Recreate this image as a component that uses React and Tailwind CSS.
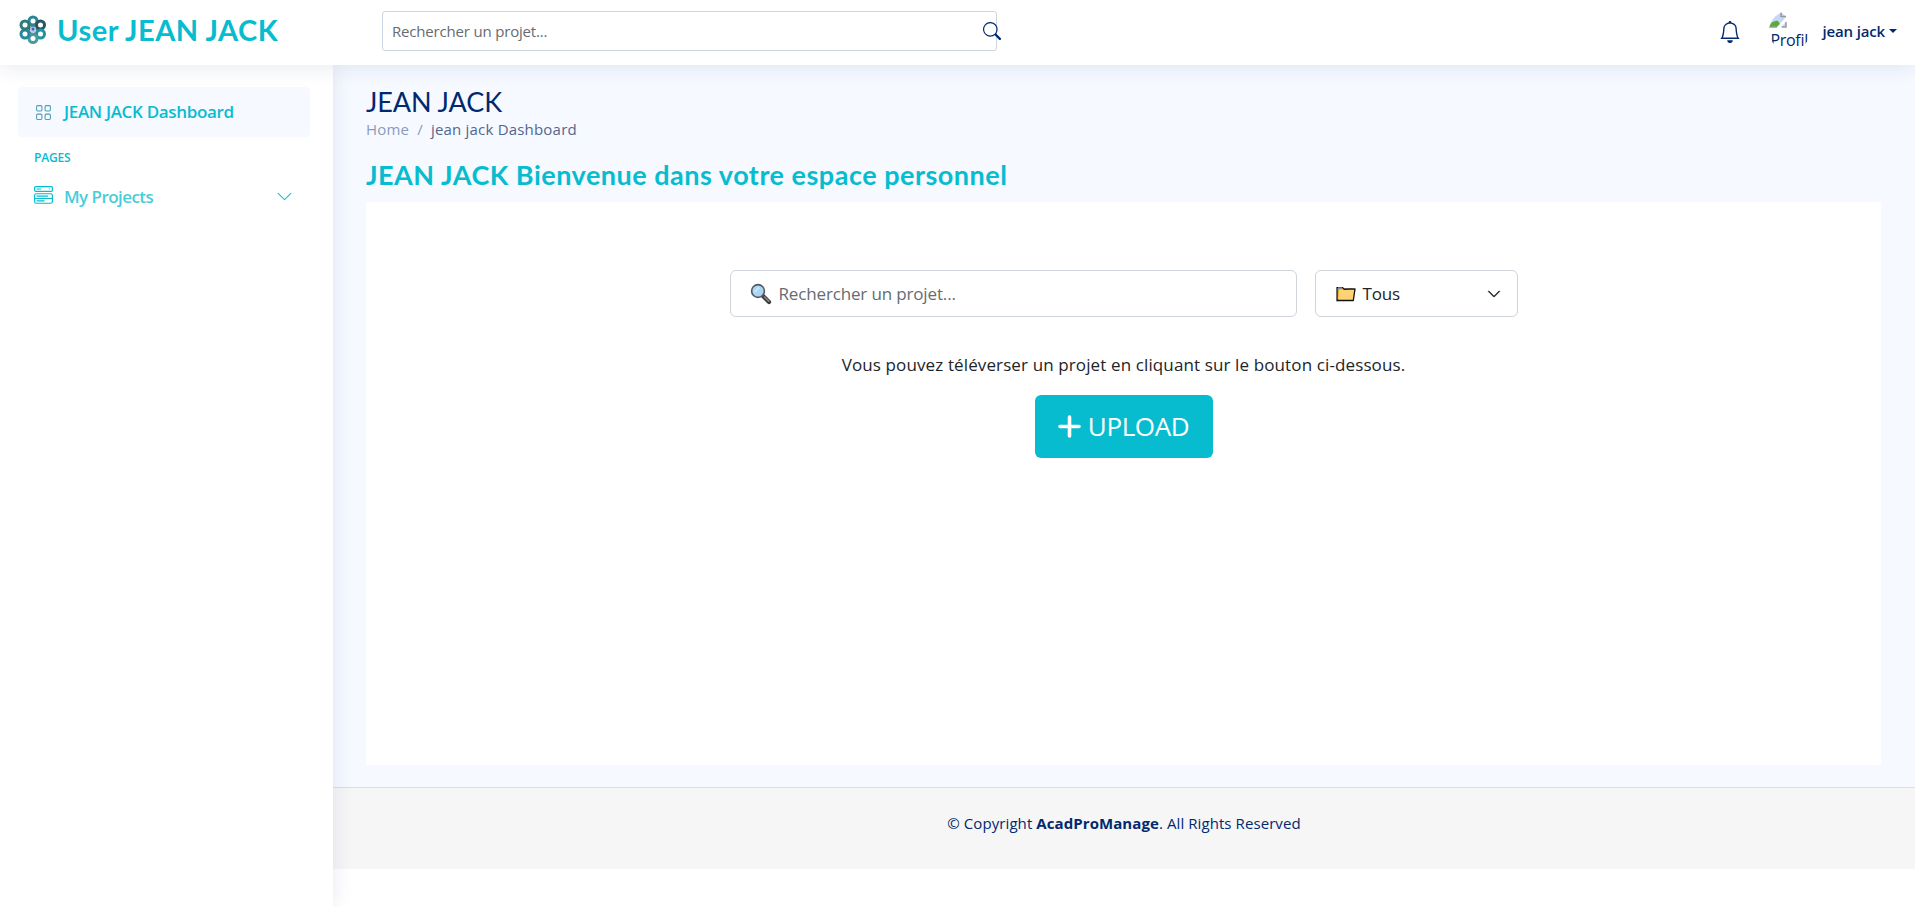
import { BsGrid, BsMenuButtonWide, BsChevronDown, BsSearch, BsBell } from "react-icons/bs";

const petals = [
  [14, 6, "#2b8795"], [21.5, 10, "#27565c"], [21.5, 19, "#1f93a3"],
  [14, 23.5, "#4a9a98"], [6, 19, "#2389a0"], [6, 10, "#2f7b78"],
];

function Logo() {
  return (
    <svg viewBox="0 0 28 30" className="h-[30px] w-7 shrink-0">
      <path d="M14 9v12M8.500 12l11 6M19.500 12l-11 6" stroke="#1b3d44" strokeWidth="3.5" />
      {petals.map(([x, y, c]) => (
        <circle key={x + "-" + y} cx={x} cy={y} r="4" fill="#fff" stroke={c} strokeWidth="3" />
      ))}
      <circle cx="14" cy="14.8" r="3.4" fill="#b9cbe0" />
      <circle cx="14" cy="14" r="1.5" fill="#3566b8" />
    </svg>
  );
}

function Glass() {
  return (
    <svg viewBox="0 0 22 22" className="h-[22px] w-[22px] shrink-0">
      <path d="M13 13 19 19" stroke="#3b3b3b" strokeWidth="4.2" strokeLinecap="round" />
      <path d="M14.5 14 18.8 18.2" stroke="#858585" strokeWidth="1.7" strokeLinecap="round" />
      <circle cx="8" cy="8" r="6.4" fill="#a9d5f5" stroke="#565a5f" strokeWidth="1.6" />
      <path d="M4.5 9 9 4.5" stroke="#c9e5f9" strokeWidth="2" />
    </svg>
  );
}

function Folder() {
  return (
    <svg viewBox="0 0 20 18" className="h-[18px] w-5 shrink-0">
      <path d="M1 15.500V2.500h5.500L8 4h8v5Z" fill="#e8a317" stroke="#111" strokeWidth="1.2" />
      <path d="M2 3h4" stroke="#3f8fe0" strokeWidth="1.500" />
      <path d="M2 15.500 3.200 4.600l15.800-.8-1.700 11.700Z" fill="#ffd273" />
      <path d="M7.500 4.300 19 3.800l-1.700 11.700H1" fill="none" stroke="#111" strokeWidth="1.300" strokeLinejoin="round" />
    </svg>
  );
}

function BrokenImage() {
  return (
    <svg viewBox="0 0 18 17" className="h-[17px] w-[18px]">
      <path d="M3 1h9l5 5v10H0V8Z" fill="#c5d8f6" />
      <path d="M0 16c2-5 6-7 9-6l4 6Z" fill="#58ad35" />
      <path d="M18 5 8 16h4l6-6Z" fill="#fff" />
      <path d="M12 1v4.500h5M17 11v5h-4M0 16h8" fill="none" stroke="#9a9a9a" strokeWidth="1.500" />
    </svg>
  );
}

function Plus() {
  return (
    <svg viewBox="0 0 23 23" className="h-[23px] w-[23px]">
      <path d="M11.500 2v19M2 11.500h19" stroke="#fff" strokeWidth="3.600" strokeLinecap="round" />
    </svg>
  );
}

export default function App() {
  return (
    <div className="flex h-[907px] w-full flex-col overflow-hidden bg-white font-['Open_Sans',sans-serif] text-[#012970]">
      <header className="relative z-20 flex h-[65px] shrink-0 items-center bg-white shadow-[0_2px_20px_rgba(1,41,112,0.1)]">
        <div className="mb-[5px] flex w-[382px] items-center pl-[19px]">
          <Logo />
          <span className="ml-[10px] whitespace-nowrap font-['Lato',sans-serif] text-[29px] font-bold leading-8 tracking-[0.5px] text-[#08bccf]">User JEAN JACK</span>
        </div>
        <div className="mb-[3px] flex h-[40px] w-[615px] items-center rounded-[3px] border border-[#ced4e2] pl-[9px]">
          <span className="text-[15px] tracking-[-0.18px] text-[#676b70]">Rechercher un projet...</span>
          <BsSearch className="-mr-[5px] ml-auto h-[18px] w-[18px] shrink-0" />
        </div>
        <div className="mb-[3px] ml-auto flex items-center pr-[18px]">
          <BsBell className="mt-[2px] h-[22px] w-[22px]" />
          <div className="ml-[28px] h-10 w-[41px] overflow-hidden rounded-full">
            <BrokenImage />
            <div className="pl-px text-[16px] leading-6 tracking-[-0.3px]">Profil</div>
          </div>
          <span className="ml-3 text-[15px] font-semibold tracking-[-0.15px]">jean jack</span>
          <span className="ml-1 border-x-4 border-t-4 border-x-transparent border-t-[#012970]" />
        </div>
      </header>
      <div className="flex min-h-0 flex-1">
        <aside className="relative z-10 w-[333px] shrink-0 bg-white px-[18px] pt-[22px] text-[#08bccf] shadow-[0_0_20px_rgba(1,41,112,0.1)]">
          <div className="flex h-[50px] w-[292px] items-center rounded bg-[#f6f9ff] pl-[17px]">
            <BsGrid className="h-[17px] w-[17px] text-[#4aa0b5]" />
            <span className="ml-3 text-[17px] font-semibold tracking-[-0.33px]">JEAN JACK Dashboard</span>
          </div>
          <div className="mt-[13px] pl-[16px] text-[12px] font-semibold leading-4 tracking-[-0.2px]">PAGES</div>
          <div className="mt-[18px] flex h-[26px] items-center pl-[16px] pr-[22px]">
            <BsMenuButtonWide className="mb-[3px] h-[19px] w-[19px]" />
            <span className="ml-[11px] text-[17px] font-semibold tracking-[-0.55px] opacity-75">My Projects</span>
            <BsChevronDown className="mb-[2px] ml-auto h-[17px] w-[17px]" />
          </div>
        </aside>
        <div className="flex min-w-0 flex-1 flex-col">
          <main className="flex h-[722px] shrink-0 flex-col bg-[#f6f9ff] pl-[33px] pr-[34px] pt-[21px]">
            <h1 className="h-[31px] font-['Lato',sans-serif] text-[27px] leading-8 tracking-[-0.1px]">JEAN JACK</h1>
            <nav className="flex h-[25px] items-center gap-2 text-[15px] tracking-[0.2px] text-[#899bbd]">
              <span>Home</span><span>/</span><span className="text-[#51678f]">jean jack Dashboard</span>
            </nav>
            <h2 className="mt-[15px] h-[45px] whitespace-nowrap font-['Lato',sans-serif] text-[27px] font-bold leading-[36px] tracking-[0.5px] text-[#08bccf]">JEAN JACK Bienvenue dans votre espace personnel</h2>
            <section className="flex h-[563px] flex-col items-center bg-white pt-[68px]">
              <div className="flex gap-[18px] text-[17px] tracking-[-0.15px]">
                <div className="flex h-[47px] w-[567px] items-center rounded-md border border-[#ced4da] pl-[19px] text-[#676b70]">
                  <Glass /><span className="ml-[7px]">Rechercher un projet...</span>
                </div>
                <div className="flex h-[47px] w-[203px] items-center rounded-md border border-[#ced4da] pl-5 pr-4 text-[#212529]">
                  <Folder /><span className="ml-[7px]">Tous</span>
                  <BsChevronDown className="ml-auto h-[14px] w-[14px] stroke-[0.7]" />
                </div>
              </div>
              <p className="mt-[35px] text-[17px] leading-[26px] tracking-[0.12px] text-[#212529]">Vous pouvez téléverser un projet en cliquant sur le bouton ci-dessous.</p>
              <button className="mt-[17px] flex h-[63px] w-[178px] items-center justify-center rounded-[6px] bg-[#08bccf] text-[26px] tracking-[-0.4px] text-white">
                <Plus /><span className="ml-[7px]">UPLOAD</span>
              </button>
            </section>
          </main>
          <footer className="flex h-[82px] shrink-0 justify-center border-t border-[#cddfff] bg-[#f6f6f6] pt-[24px] text-[15px] leading-[22px] tracking-[0.08px]">
            <span>© Copyright <b>AcadProManage</b>. All Rights Reserved</span>
          </footer>
        </div>
      </div>
    </div>
  );
}
